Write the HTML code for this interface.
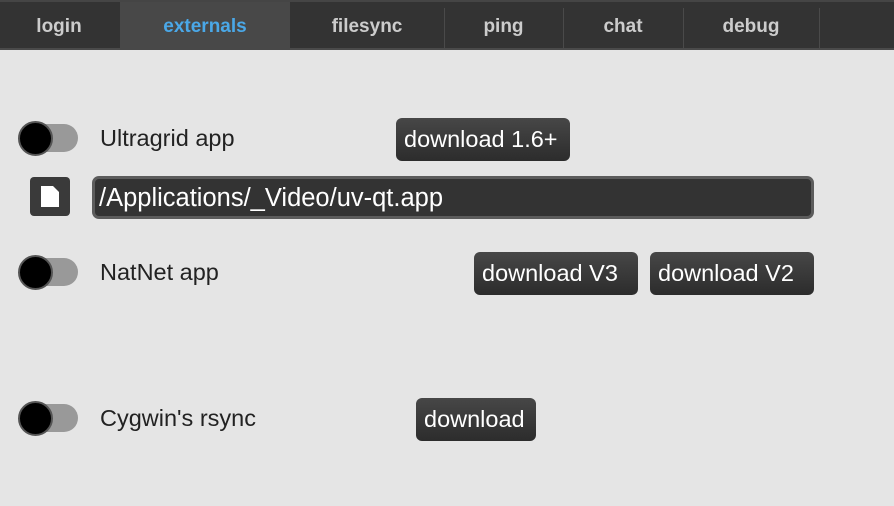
<!DOCTYPE html><html><head><style>
body{margin:0;width:894px;height:506px;background:#e5e5e5;font-family:"Liberation Sans",sans-serif;position:relative;overflow:hidden}
.bar{position:absolute;left:0;top:0;width:894px;height:50px;background:#333;border-top:2px solid #454545;box-sizing:border-box;border-bottom:2px solid #4a4a4a}
.tab{position:absolute;top:0;height:48px;line-height:50px;text-align:center;color:#ccc;font-weight:bold;font-size:19px}
.sep{position:absolute;top:6px;width:1px;height:40px;background:#4a4a4a}
.act{background:#484848;color:#4aa8e8}
.tg{position:absolute;left:18px;width:60px;height:30px}
.tg .tr{position:absolute;left:8px;top:2px;width:52px;height:28px;border-radius:14px;background:#999}
.tg .k{position:absolute;left:0;top:-1px;width:31px;height:31px;border-radius:50%;background:#000;border:2px solid #555}
.lb{position:absolute;left:100px;font-size:23.5px;color:#222}
.btn{position:absolute;height:43px;line-height:43px;border-radius:6px;background:linear-gradient(#474747,#2c2c2c);color:#fff;font-size:23.5px;padding-left:8px;box-sizing:border-box;white-space:nowrap}
</style></head><body>
<div class="bar">
<div class="tab" style="left:0;width:118px">login</div>
<div class="tab act" style="left:120px;width:170px">externals</div>
<div class="tab" style="left:290px;width:154px">filesync</div>
<div class="sep" style="left:444px"></div>
<div class="tab" style="left:444px;width:119px">ping</div>
<div class="sep" style="left:563px"></div>
<div class="tab" style="left:563px;width:120px">chat</div>
<div class="sep" style="left:683px"></div>
<div class="tab" style="left:683px;width:136px">debug</div>
<div class="sep" style="left:819px"></div>
</div>
<div class="tg" style="top:122px"><div class="tr"></div><div class="k"></div></div>
<div class="lb" style="top:125px">Ultragrid app</div>
<div class="btn" style="left:396px;top:118px;width:174px">download 1.6+</div>
<div style="position:absolute;left:30px;top:177px;width:40px;height:39px;background:#3a3a3a;border-radius:4px">
<svg width="40" height="39"><path d="M11 9h12l6 6v15h-18z" fill="#fff"/></svg></div>
<div style="position:absolute;left:92px;top:176px;width:722px;height:43px;box-sizing:border-box;border:3px solid #5c5c5c;border-radius:7px;background:#333;color:#fff;font-size:25.5px;line-height:38px;padding-left:4px">/Applications/_Video/uv-qt.app</div>
<div class="tg" style="top:256px"><div class="tr"></div><div class="k"></div></div>
<div class="lb" style="top:259px">NatNet app</div>
<div class="btn" style="left:474px;top:252px;width:164px">download V3</div>
<div class="btn" style="left:650px;top:252px;width:164px">download V2</div>
<div class="tg" style="top:402px"><div class="tr"></div><div class="k"></div></div>
<div class="lb" style="top:405px">Cygwin's rsync</div>
<div class="btn" style="left:416px;top:398px;width:120px">download</div>
</body></html>
